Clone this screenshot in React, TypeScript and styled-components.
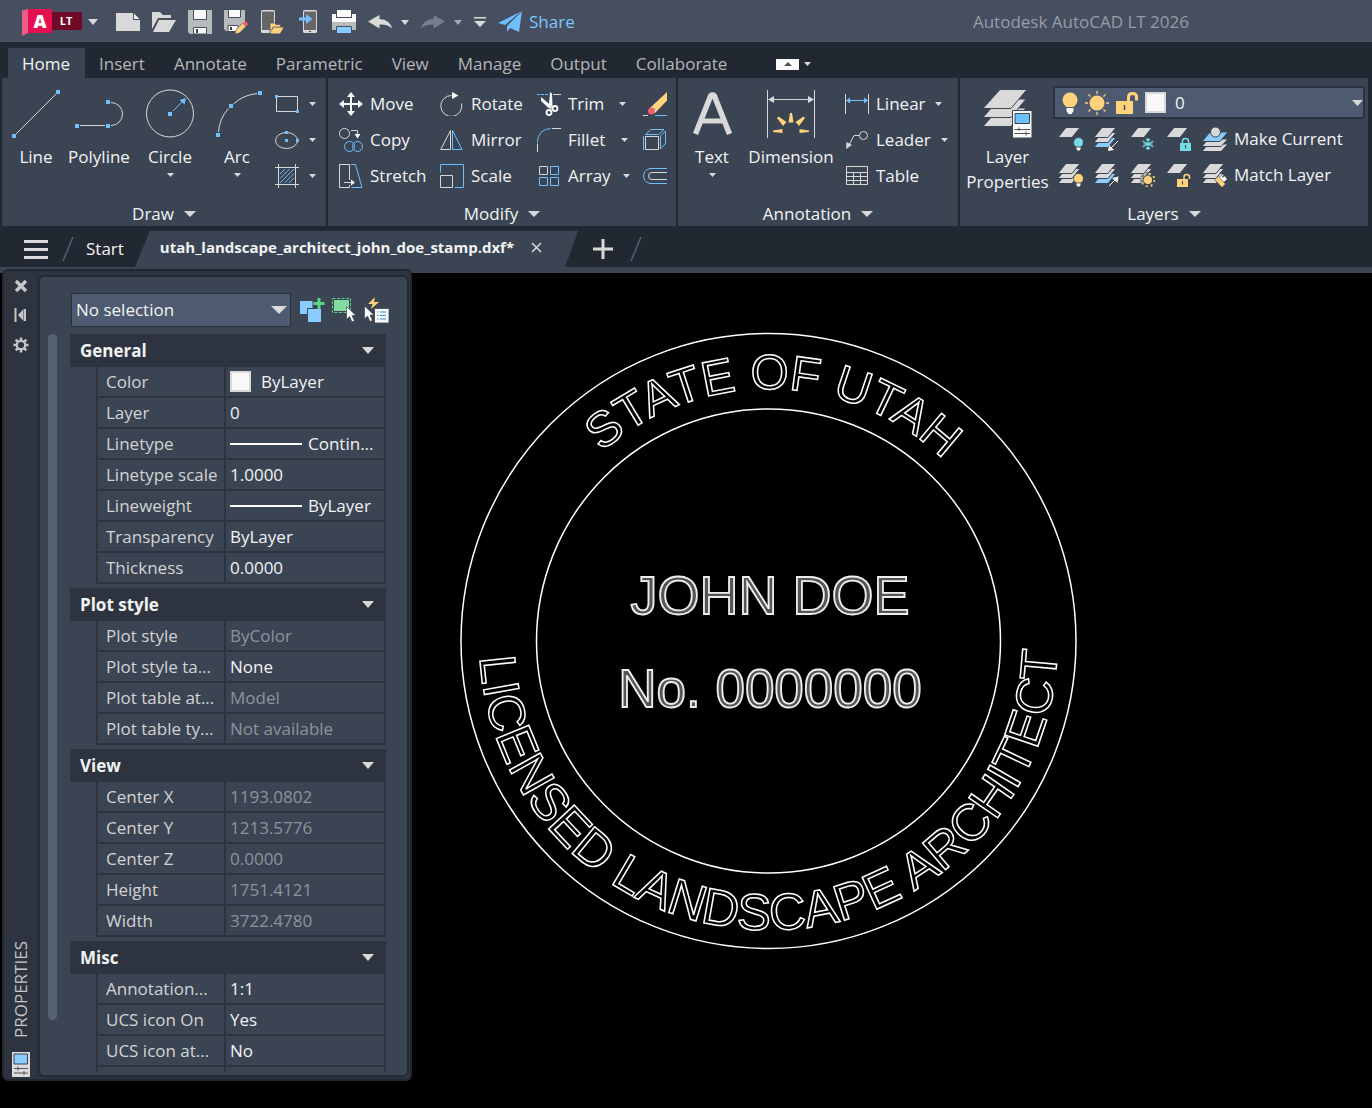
import React from "react";
import styled, { createGlobalStyle } from "styled-components";

const color = {
  title: "#464e60",
  dark: "#222831",
  panel: "#3b4453",
  header: "#2d333f",
  field: "#4d5a6f",
  line: "#d9d9d9",
  blue: "#6ebffc",
  sky: "#8accff",
  yellow: "#ffd27b",
  teal: "#76dce6",
  text: "#f2f3f4",
  muted: "#b4b7ba",
};

const Global = createGlobalStyle`
  *, *::before, *::after { box-sizing: border-box; }
  body {
    margin: 0;
    background: #000;
    color: ${color.text};
    font: 17px/24px "Open Sans", "Noto Sans", sans-serif;
  }
  button, select { font: inherit; color: inherit; }
  button { background: none; border: 0; padding: 0; cursor: pointer; }
  svg { display: block; flex: none; }
`;

const Shell = styled.div`
  height: 100vh;
  display: flex;
  flex-direction: column;
  overflow: hidden;
`;

/* ---------- title bar ---------- */

const TitleBar = styled.header`
  flex: none;
  height: 42px;
  display: flex;
  align-items: center;
  padding: 2px 183px 0 22px;
  background: ${color.title};
`;

const Brand = styled.div`
  display: flex;
  align-items: center;
  gap: 6px;
`;

const QuickTools = styled.div`
  display: flex;
  align-items: center;
  gap: 12px;
  margin-left: 18px;
`;

const ToolButton = styled.button`
  display: flex;
  align-items: center;
  gap: 9px;
`;

const Share = styled.a`
  display: flex;
  align-items: center;
  gap: 7px;
  color: #7fc8fd;
  text-decoration: none;
`;

const AppTitle = styled.span`
  margin-left: auto;
  color: #979ca6;
`;

/* ---------- ribbon ---------- */

const RibbonTabs = styled.nav`
  flex: none;
  height: 36px;
  display: flex;
  align-items: flex-end;
  padding-left: 8px;
  background: ${color.dark};
`;

const RibbonTab = styled.button<{ $active?: boolean }>`
  height: 30px;
  padding: 2px 15px 0 14px;
  background: ${(p) => (p.$active ? color.panel : "transparent")};
  color: ${(p) => (p.$active ? color.text : color.muted)};
`;

const RibbonToggle = styled.div`
  height: 30px;
  display: flex;
  align-items: center;
  gap: 5px;
  margin-left: 34px;
  padding-top: 2px;
`;

const MinimizeButton = styled.button`
  width: 23px;
  height: 11px;
  display: grid;
  place-items: center;
  background: #fafafa;
`;

const Ribbon = styled.section`
  flex: none;
  height: 149px;
  display: flex;
  padding: 0 2px 1px;
  background: ${color.dark};
`;

const PanelBox = styled.section<{ $width?: number }>`
  flex: ${(p) => (p.$width ? `none` : `1`)};
  width: ${(p) => (p.$width ? `${p.$width}px` : `auto`)};
  display: flex;
  flex-direction: column;
  justify-content: space-between;
  border-right: 2px solid ${color.dark};
  background: ${color.panel};
`;

const PanelBody = styled.div<{ $inset: number }>`
  display: flex;
  padding: 8px 0 0 ${(p) => p.$inset}px;
`;

const PanelTitle = styled.button`
  display: flex;
  align-items: center;
  justify-content: center;
  gap: 10px;
  height: 25px;
`;

const BigButton = styled.button<{ $width: number }>`
  width: ${(p) => p.$width}px;
  display: flex;
  flex-direction: column;
  align-items: center;
  line-height: 25px;
  padding-top: 2px;
`;

const BigLabel = styled.span`
  margin: 6px 0 4px;
  white-space: pre;
`;

const SmallColumn = styled.div<{ $width?: number; $lead?: number }>`
  width: ${(p) => (p.$width ? `${p.$width}px` : "auto")};
  margin-left: ${(p) => p.$lead ?? 0}px;
  display: grid;
  grid-template-rows: repeat(3, 36px);
  align-items: center;
  align-content: start;
`;

const SmallButton = styled.button<{ $gap?: number }>`
  height: 24px;
  display: flex;
  align-items: center;
  gap: ${(p) => p.$gap ?? 7}px;
`;

const SmallLabel = styled.span<{ $width?: number }>`
  min-width: ${(p) => (p.$width ? `${p.$width}px` : "0")};
  text-align: left;
`;

const LayerTools = styled.div`
  flex: 1;
  padding-right: 3px;
`;

const LayerPicker = styled.label`
  height: 33px;
  display: flex;
  align-items: center;
  gap: 6px;
  margin-bottom: 2px;
  padding: 0 0 0 6px;
  border: 2px solid #2c3340;
  background: ${color.field};
`;

const Swatch = styled.span`
  flex: none;
  width: 21px;
  height: 21px;
  border: 2px solid #d8d8d8;
  background: #f8f8f8;
`;

const PlainSelect = styled.select<{ $inset?: number }>`
  flex: 1;
  min-width: 0;
  appearance: none;
  padding: 0 0 0 ${(p) => p.$inset ?? 0}px;
  border: 0;
  outline: 0;
  background: transparent;
`;

const LayerRow = styled.div`
  display: flex;
  align-items: center;
  gap: 12px;
  height: 36px;
  padding-left: 6px;
`;

/* ---------- file tabs ---------- */

const FileTabs = styled.nav`
  flex: none;
  height: 46px;
  display: flex;
  align-items: center;
  padding: 4px 0 0 24px;
  border-bottom: 6px solid ${color.panel};
  background: ${color.dark};
`;

const StartTab = styled.button`
  display: flex;
  align-items: center;
  gap: 12px;
  margin: 0 11px 0 14px;
`;

const FileTab = styled.div`
  height: 36px;
  display: flex;
  align-items: center;
  gap: 17px;
  padding: 0 36px 4px 25px;
  background: ${color.panel};
  clip-path: polygon(15px 0, 100% 0, calc(100% - 13px) 100%, 0 100%);
  font-size: 15px;
  font-weight: 700;
`;

const NewTab = styled.button`
  margin: 0 16px 0 14px;
`;

/* ---------- workspace and palette ---------- */

const Workspace = styled.main`
  flex: 1;
  min-height: 0;
  display: flex;
  background: #000;
`;

const Palette = styled.aside`
  position: relative;
  flex: none;
  width: 410px;
  display: flex;
  margin: -4px 0 27px 2px;
  padding: 4px 1px 2px 0;
  border: 2px solid ${color.dark};
  border-radius: 6px;
  background: ${color.header};
`;

const Rail = styled.div`
  width: 34px;
  display: flex;
  flex-direction: column;
  align-items: center;
  gap: 14px;
  padding-top: 4px;
`;

const RailName = styled.span`
  margin-top: auto;
  writing-mode: vertical-rl;
  transform: rotate(180deg);
  line-height: 24px;
  color: #c3c6ca;
`;

const PaletteBody = styled.div`
  flex: 1;
  min-width: 0;
  display: flex;
  flex-direction: column;
  padding: 16px 0 3px 8px;
  border: 2px solid #252b35;
  border-radius: 6px;
  background: ${color.panel};
`;

const Toolbar = styled.div`
  display: flex;
  align-items: center;
  gap: 6px;
  padding-left: 23px;
`;

const SelectionPicker = styled.label`
  flex: none;
  width: 220px;
  height: 34px;
  display: flex;
  align-items: center;
  margin-right: 2px;
  padding: 0 3px 0 4px;
  border: 1px solid #2a303b;
  border-radius: 2px;
  background: ${color.field};
`;

const Scroller = styled.div`
  flex: 1;
  min-height: 0;
  display: flex;
  gap: 13px;
  margin-top: 7px;
  padding-right: 21px;
  overflow: hidden;
`;

const ScrollThumb = styled.div`
  flex: none;
  width: 9px;
  height: 93%;
  border-radius: 5px;
  background: #566172;
`;

const Groups = styled.div`
  flex: 1;
  display: flex;
  flex-direction: column;
  gap: 4px;
`;

const GroupHead = styled.button`
  width: 100%;
  height: 33px;
  display: flex;
  align-items: center;
  justify-content: space-between;
  padding: 0 12px 0 10px;
  background: ${color.header};
  font-weight: 700;
`;

const PropTable = styled.table`
  width: calc(100% - 26px);
  margin-left: 26px;
  table-layout: fixed;
  border-spacing: 0;
  border-left: 2px solid ${color.header};
`;

const PropName = styled.th`
  width: 128px;
  height: 31px;
  padding: 0 0 0 8px;
  border: solid ${color.header};
  border-width: 0 2px 2px 0;
  color: #d2d3d4;
  font-weight: 400;
  text-align: left;
  white-space: nowrap;
`;

const PropValue = styled.td<{ $dim?: boolean }>`
  height: 31px;
  padding: 0 0 0 4px;
  border: solid ${color.header};
  border-width: 0 2px 2px 0;
  color: ${(p) => (p.$dim ? "#8d939c" : color.text)};
  white-space: nowrap;
`;

const ValueRow = styled.span<{ $gap: number }>`
  display: flex;
  align-items: center;
  gap: ${(p) => p.$gap}px;
`;

const Stroke = styled.span`
  width: 72px;
  height: 2px;
  background: #fff;
`;

const DrawingArea = styled.div`
  flex: 1;
  padding: 59px 0 0 47px;
`;

/* ---------- icons ---------- */

type Kids = { children?: React.ReactNode; w?: number; h?: number };

const Svg = ({ children, w = 24, h = 24 }: Kids) => (
  <svg width={w} height={h} viewBox={`0 0 ${w} ${h}`} fill="none" stroke={color.line} strokeWidth={1} aria-hidden="true">
    {children}
  </svg>
);

const Caret = ({ w = 7, h = 4, fill = color.line }: { w?: number; h?: number; fill?: string }) => (
  <svg width={w} height={h} viewBox={`0 0 ${w} ${h}`} aria-hidden="true">
    <path d={`M0 0H${w}L${w / 2} ${h}Z`} fill={fill} />
  </svg>
);

const Dots = ({ at, s = 4 }: { at: number[][]; s?: number }) => (
  <g fill={color.blue} stroke="none">
    {at.map(([x, y]) => (
      <rect key={`${x}-${y}`} x={x - s / 2} y={y - s / 2} width={s} height={s} />
    ))}
  </g>
);

const Logo = () => (
  <svg width="60" height="28" viewBox="0 0 60 28" role="img" aria-label="AutoCAD LT">
    <path d="M0 2.500L6 1V25L0 28Z" fill="#ef5c86" />
    <path d="M6 1H30V25H6Z" fill="#e51050" />
    <path d="M30 4H60V22H30Z" fill="#700a28" />
    <text x="18" y="19.500" textAnchor="middle" fontFamily="Open Sans" fontWeight="800" fontSize="18" fill="#fff">A</text>
    <text x="44" y="17" textAnchor="middle" fontFamily="Open Sans" fontWeight="700" fontSize="11" fill="#fff">LT</text>
  </svg>
);

const NewIcon = () => (
  <Svg><g stroke="none"><path d="M0 3H17V10H24V21H0Z" fill="#d9d9d9" /><path d="M18 3.500L23.500 9H18Z" fill="#fafafa" /></g></Svg>
);
const OpenIcon = () => (
  <Svg><g stroke="none" fill="#d9d9d9"><path d="M0 2H8L11 5H19V8H6L0 19Z" /><path d="M7 10H24L17 22H1Z" /></g></Svg>
);
const SaveIcon = () => (
  <Svg>
    <g stroke="none"><path d="M0 0H24V24H2L0 22Z" fill="#b9babc" /><path d="M5.500 -1H18.500V9.500H5.500Z" fill="#fafafa" stroke={color.title} /><path d="M5.500 17.500H18.500V24H5.500Z" fill="#fafafa" stroke={color.title} /><path d="M8 19H10V23H8Z" fill="#3b4453" /></g>
  </Svg>
);
const SaveAsIcon = () => (
  <Svg>
    <g stroke="none"><path d="M0 0H21V12L12 21H2L0 19Z" fill="#b9babc" /><path d="M4.500 -1H16.500V7.500H4.500Z" fill="#fafafa" stroke={color.title} /><path d="M4 15.500H14V21.500H4Z" fill="#fafafa" stroke={color.title} /><path d="M6 17H8V20H6Z" fill="#3b4453" /><path d="M11 24L12.500 19L19 13L22 16.500L15.500 23Z" fill={color.yellow} stroke={color.title} strokeWidth=".6" /><path d="M18.500 13.500L21 11.500Q23.500 11.500 24 14.500L21.500 16.500Z" fill="#ef6268" /></g>
  </Svg>
);
const OpenMobileIcon = () => (
  <Svg>
    <g stroke="none"><rect x="1" y="0" width="14" height="23" rx="1.500" fill="#d9d9d9" /><path d="M2 1.500H14V20H2Z" fill="#666" /><path d="M10 13H14.500L16 14.500H20.500V17H13L10 23Z" fill={color.yellow} stroke={color.title} strokeWidth=".7" /><path d="M13.500 17.500H23.500L20 23.500H10.500Z" fill={color.yellow} /></g>
  </Svg>
);
const SaveMobileIcon = () => (
  <Svg>
    <g stroke="none"><rect x="7" y="0" width="14" height="23" rx="1.500" fill="#d9d9d9" /><path d="M8 1.500H20V20H8Z" fill="#666" /><path d="M13 21H15V22H13Z" fill="#444" /><path d="M3 7.500H10V4L16.500 9L10 14V10.500H3Z" fill={color.blue} /></g>
  </Svg>
);
const PrintIcon = () => (
  <Svg>
    <g stroke="none"><path d="M5 0H19V7H5Z" fill="#fafafa" /><path d="M0 4H4V8H20V4H24V12H0Z" fill="#fafafa" /><path d="M0 12H24V20H0Z" fill="#b9babc" /><path d="M4.500 16.500H19.500V23.500H4.500Z" fill={color.sky} stroke={color.title} /></g>
  </Svg>
);
const UndoIcon = ({ flip, fill = color.line }: { flip?: boolean; fill?: string }) => (
  <Svg>
    <path transform={flip ? "matrix(-1 0 0 1 24 0)" : undefined} stroke="none" fill={fill} d="M0 11.500L11.500 5V9Q22 9.500 24 18.500Q19.500 14 11.500 14.500V18.500Z" />
  </Svg>
);
const CustomizeIcon = () => (
  <Svg w={12} h={10}><path stroke="none" fill={color.line} d="M0 0H12V1.500H0ZM0 4H12L6 10Z" /></Svg>
);
const PlaneIcon = () => (
  <Svg><g stroke="none" fill={color.blue}><path d="M24 1L0 13L7 15Z" /><path d="M24 1L9 16V22L12 18L21 22Z" /></g><path d="M24 1L8 15.500V22" stroke={color.title} strokeWidth=".8" /></Svg>
);

const LineIcon = () => (<Svg w={50} h={50}><path d="M5 46L46 5" /><Dots at={[[3, 48], [47, 4]]} /></Svg>);
const PolylineIcon = () => (<Svg w={50} h={50}><path d="M6 37.500H31M37 37.500A11.500 11.500 0 0 0 37 14.500" /><Dots at={[[3, 38], [34, 38], [34, 14]]} /></Svg>);
const CircleIcon = () => (
  <Svg w={50} h={50}><circle cx="25" cy="25.500" r="23.500" /><path d="M28 23L38 13" stroke={color.blue} /><path d="M41 10L39.500 16.500L34.500 12Z" fill={color.blue} stroke="none" /><Dots at={[[25, 26]]} /></Svg>
);
const ArcIcon = () => (<Svg w={50} h={50}><path d="M6.500 44Q7.500 30 16.500 20.500M21.500 16Q31 7 45 5.500" /><Dots at={[[6, 47], [19, 18], [48, 5]]} /></Svg>);
const RectIcon = () => (<Svg><path d="M1.500 4.500H22.500V19.500H1.500Z" /><Dots s={3} at={[[1.5, 4.5], [22.5, 19.5]]} /></Svg>);
const EllipseIcon = () => (<Svg><ellipse cx="11.500" cy="12.500" rx="11" ry="8" /><Dots s={3} at={[[11.5, 4.5], [11.5, 12.5], [22.5, 12.5]]} /></Svg>);
const HatchIcon = () => (
  <Svg><path d="M3.500 0V24M20.500 0V24M0 3.500H24M0 20.500H24" /><path d="M5 10L10 5M5 14.500L14.500 5M5 19L19 5M9.500 19L19 9.500M14 19L19 14" stroke={color.blue} /></Svg>
);
const MoveIcon = () => (
  <Svg><path d="M12 3V21M3 12H21" stroke="#fafafa" strokeWidth="2" /><path stroke="none" fill="#fafafa" d="M12 0L16 5H8ZM12 24L8 19H16ZM0 12L5 8V16ZM24 12L19 16V8Z" /></Svg>
);
const CopyIcon = () => (
  <Svg><circle cx="5.500" cy="5.500" r="5" /><path d="M12 2.500H18.500V7" /><path d="M15.500 6H21.500L18.500 10.500Z" fill="#fafafa" stroke="none" /><g stroke={color.blue}><circle cx="10.500" cy="18.500" r="5" /><circle cx="18.500" cy="18.500" r="5" /></g></Svg>
);
const StretchIcon = () => (
  <Svg><path d="M10.500 16V.500H.500V23.500H10.500V21M5 18.500H13" /><path d="M12 15.500L16 18.500L12 21.500Z" fill="#fafafa" stroke="none" /><path d="M12 .500H16.500L23 23.500H12.500" stroke={color.blue} /></Svg>
);
const RotateIcon = () => (
  <Svg><path d="M21.500 11.500A10.500 10.500 0 1 1 11.500 3.500" /><path d="M12 0L18.500 3.500L12 7Z" fill="#fafafa" stroke="none" /></Svg>
);
const MirrorIcon = () => (<Svg><path d="M10.500 2.500V21.500H.800Z" /><path d="M12.500 2.500V21.500H22Z" stroke={color.blue} /></Svg>);
const ScaleIcon = () => (<Svg><path d="M.500 8.500V.500H23.500V23.500H15" stroke={color.blue} /><path d="M.500 11.500H12.500V23.500H.500Z" /></Svg>);
const TrimIcon = () => (
  <Svg><path d="M0 2.500H11" stroke={color.blue} strokeDasharray="3 1" /><path d="M16 2.500H24" /><path stroke="none" fill="#fafafa" d="M4 5L13.500 13L15 17L11.500 16L4 9ZM13 0L15 1.500L15.500 14L12.500 16L12 12Z" /><g stroke="#fafafa" strokeWidth="1.800"><circle cx="12" cy="20.500" r="2.500" /><circle cx="18" cy="16.500" r="2.500" /></g></Svg>
);
const FilletIcon = () => (<Svg><path d="M.500 14.500A13 13 0 0 1 13.500 .500" stroke={color.blue} /><path d="M15 .500H24M.500 15.500V24" /></Svg>);
const ArrayIcon = () => (
  <Svg><path d="M2.500 2.500H10.500V10.500H2.500Z" /><path stroke={color.blue} d="M13.500 2.500H21.500V10.500H13.500ZM2.500 13.500H10.500V21.500H2.500ZM13.500 13.500H21.500V21.500H13.500Z" /></Svg>
);
const EraseIcon = () => (
  <Svg><path d="M0 23.500H5" /><path d="M12 23.500H24" stroke={color.blue} /><g stroke="none"><path d="M24 0V8.500L14 19L8.500 14.500Z" fill={color.yellow} /><path d="M8.500 14.500L14 19L12 21L6.500 16.500Z" fill="#fafafa" /><circle cx="8.500" cy="19" r="3.500" fill="#ef6268" /></g></Svg>
);
const ExplodeIcon = () => (
  <Svg><path d="M2.500 8.500H15.500V21.500H2.500Z" /><path stroke={color.blue} d="M2.500 6.500L8 1.500H21L15.500 6.500ZM17.500 8L22.500 3V15.500L17.500 21ZM.500 8V22" /></Svg>
);
const OffsetIcon = () => (<Svg><path stroke={color.blue} d="M24 4.500H8A7.500 7.500 0 0 0 8 19.500H24" /><path d="M24 8.500H9A3.500 3.500 0 0 0 9 15.500H24" /></Svg>);

const TextIcon = () => (
  <Svg w={50} h={50}><path d="M8.500 46L24 7H27L42.500 46" strokeWidth="5.500" strokeLinejoin="bevel" /><path d="M15 33H36" strokeWidth="5" /></Svg>
);
const DimensionIcon = () => (
  <Svg w={50} h={50}>
    <path d="M1.500 2V50M48.500 2V50M5 11.500H45" />
    <path stroke="none" fill={color.line} d="M2 11.500L8 8V15ZM48 11.500L42 8V15Z" />
    <path stroke="none" fill={color.yellow} d="M24 25H26L27.500 34.500H22.500ZM11 30L12.500 28.500L20.500 34L17 38ZM39 30L37.500 28.500L29.500 34L33 38ZM7 42.500L16.500 41V45L7 44ZM43 42.500L33.500 41V45L43 44Z" />
  </Svg>
);
const LinearIcon = () => (
  <Svg><path d="M.500 2V22M23.500 2V22" /><path d="M3 8.500H21" stroke={color.blue} /><path stroke="none" fill={color.blue} d="M1 8.500L5 5.500V11.500ZM23 8.500L19 11.500V5.500Z" /></Svg>
);
const LeaderIcon = () => (
  <Svg><circle cx="18.500" cy="7.500" r="4" /><path d="M14.500 7.500H9L4 17" /><path d="M1 21L1.500 14L7 17Z" fill={color.line} stroke="none" /></Svg>
);
const TableIcon = () => (<Svg><path d="M1.500 2.500H22.500V20.500H1.500ZM1.500 8.500H22.500M1.500 12.500H22.500M1.500 16.500H22.500M8.500 8.500V20.500M15.500 8.500V20.500" /></Svg>);

const LayerPropsIcon = () => (
  <Svg w={50} h={50}>
    <g stroke={color.panel} fill={color.line}><path d="M0 38.500L16 20H43L28 38.500Z" /><path d="M0 29.500L16 11H43L28 29.500Z" /><path d="M0 20.500L17 1.500H44L28 20.500Z" /></g>
    <path d="M29.500 22.500H49V50H29.500Z" fill="#fafafa" stroke={color.panel} />
    <path d="M32 25.500H46.500V35.500H32Z" fill={color.blue} stroke="#3b4453" />
    <path d="M31.500 41.500H47M31.500 45.500H47M36 39.500V43M43 43.500V47.500" stroke="#555" />
  </Svg>
);

const Sheets = ({ n = 3, mark }: { n?: number; mark?: number }) => (
  <g stroke={color.panel}>
    {[2, 1, 0].filter((i) => i < n).map((i) => (
      <path key={i} d={`M-1 ${10.5 + i * 5}L7 ${0.5 + i * 5}H21L13 ${10.5 + i * 5}Z`} fill={mark === i ? color.sky : color.line} />
    ))}
  </g>
);
const MiniBulb = ({ fill }: { fill: string }) => (
  <g stroke={color.panel} strokeWidth=".8"><circle cx="19.500" cy="15.500" r="5" fill={fill} /><path d="M17 20H22V22L20.500 24H18.500L17 22Z" fill="#fafafa" /></g>
);
const MiniLock = ({ fill, open }: { fill: string; open?: boolean }) => (
  <g><path stroke={fill} strokeWidth="1.500" d={open ? "M17 17V14Q17 11.500 19.500 11.500Q22.500 11.500 22.500 14V16" : "M15.500 17V14Q15.500 11.500 18.500 11.500Q21.500 11.500 21.500 14V17"} /><path d={open ? "M10 16H21V24H10Z" : "M13 16H24V24H13Z"} fill={fill} stroke="none" /><path d={open ? "M15.500 18V21.500" : "M18.500 18V21.500"} stroke="#3b4453" /></g>
);
const layerTools = [
  [
    { name: "Off", icon: <Svg><Sheets n={1} /><MiniBulb fill={color.teal} /></Svg> },
    { name: "Isolate", icon: <Svg><Sheets mark={2} /><path d="M23 14L15 22" stroke="#fafafa" /><path d="M13 24L14 18L19 23Z" fill="#fafafa" stroke="none" /></Svg> },
    { name: "Freeze", icon: <Svg><Sheets n={1} /><path stroke={color.teal} strokeWidth="1.200" d="M17 11V23M11.500 14L22.500 20M11.500 20L22.500 14M15 12L17 14L19 12M15 22L17 20L19 22M12 17H22" /></Svg> },
    { name: "Lock", icon: <Svg><Sheets n={1} /><MiniLock fill={color.teal} /></Svg> },
  ],
  [
    { name: "Turn all layers on", icon: <Svg><Sheets /><MiniBulb fill={color.yellow} /></Svg> },
    { name: "Unisolate", icon: <Svg><Sheets mark={2} /><path d="M14 23L21 16" stroke="#fafafa" /><path d="M23.500 13.500L22.500 20L17 15Z" fill="#fafafa" stroke="none" /></Svg> },
    { name: "Thaw all layers", icon: <Svg><Sheets /><circle cx="17" cy="17" r="8" fill={color.panel} stroke="none" opacity=".6" /><circle cx="17" cy="17" r="4" fill={color.yellow} stroke="none" /><circle cx="17" cy="17" r="6.500" stroke={color.yellow} strokeDasharray="2 3.100" strokeWidth="1.800" /></Svg> },
    { name: "Unlock", icon: <Svg><Sheets n={1} /><MiniLock fill={color.yellow} open /></Svg> },
  ],
];
const MakeCurrentIcon = () => (
  <Svg>
    <g stroke={color.panel} fill={color.line}><path d="M-1 24.500L5 17H25L18 24.500Z" /><path d="M-1 19.500L5 12H25L18 19.500Z" /><path d="M-1 14.500L7 5H25L17 14.500Z" fill={color.sky} /><circle cx="12.500" cy="5" r="5" /></g>
  </Svg>
);
const MatchLayerIcon = () => (
  <Svg>
    <Sheets />
    <g stroke={color.panel} strokeWidth=".6"><path d="M15 15L20 11L24.500 16L20 20Z" fill="#fafafa" /><path d="M11.500 16.500L15 13.500L22.500 21L19 24.500Z" fill={color.yellow} /></g><path d="M19.500 14L22.500 11.500" stroke={color.panel} strokeWidth="1.500" />
  </Svg>
);

const BulbIcon = () => (
  <Svg w={18}><g stroke="none"><path d="M9 1.500A7.500 7.500 0 0 1 14.500 14L12.500 16H5.500L3.500 14A7.500 7.500 0 0 1 9 1.500Z" fill={color.yellow} /><path d="M5.500 17H12.500V20L10.500 23H7.500L5.500 20Z" fill="#fafafa" /></g></Svg>
);
const SunIcon = () => (
  <Svg><circle cx="12" cy="12" r="7.500" fill={color.yellow} stroke="none" /><path stroke={color.yellow} strokeWidth="1.300" d="M12 0V3M12 21V24M0 12H3M21 12H24M3.500 3.500L5.500 5.500M18.500 18.500L20.500 20.500M3.500 20.500L5.500 18.500M18.500 5.500L20.500 3.500" /></Svg>
);
const UnlockIcon = () => (
  <Svg><path d="M1 10H18V23H1Z" fill={color.yellow} stroke="none" /><path d="M13.500 10V6Q13.500 2.500 17.500 2.500Q21.500 2.500 21.500 6V9.500" stroke={color.yellow} strokeWidth="3" /><path d="M9.500 14V19" stroke="#444" strokeWidth="1.500" /></Svg>
);

const MenuIcon = () => (<Svg h={19}><path d="M0 1.500H24M0 9.500H24M0 17.500H24" strokeWidth="3" /></Svg>);
const SlashIcon = () => (<Svg w={12} h={24}><path d="M1 24L11 0" stroke="#555f70" strokeWidth="1.500" /></Svg>);
const TabCloseIcon = () => (<Svg w={11} h={11}><path d="M1 1L10 10M10 1L1 10" strokeWidth="1.500" /></Svg>);
const PlusIcon = () => (<Svg w={22} h={22}><path d="M11 1V21M1 11H21" strokeWidth="3" /></Svg>);

const RailCloseIcon = () => (<Svg w={14} h={14}><path d="M2 2L12 12M12 2L2 12" stroke="#c4c6c9" strokeWidth="3.500" /></Svg>);
const RailPinIcon = () => (<Svg w={14} h={16}><path d="M1.500 1V15" stroke="#c4c6c9" strokeWidth="2" /><path d="M4 8L9.500 2V14ZM10 2H12V14H10Z" fill="#c4c6c9" stroke="none" /></Svg>);
const RailGearIcon = () => (
  <Svg w={16} h={16}>
    <circle cx="8" cy="8" r="4.200" stroke="#c4c6c9" strokeWidth="2.200" />
    <path d="M8 .500V4M8 12V15.500M.500 8H4M12 8H15.500M2.700 2.700L5.200 5.200M10.800 10.800L13.300 13.300M2.700 13.300L5.200 10.800M10.800 5.200L13.300 2.700" stroke="#c4c6c9" strokeWidth="2.600" />
  </Svg>
);
const RailPropsIcon = () => (
  <Svg w={18} h={25}><path d="M0 0H18V25H0Z" fill="#dcdcdc" stroke="none" /><path d="M2 2H15.500V12H2Z" fill={color.sky} stroke="#3b4453" /><path d="M2 16.500H16M2 21H16M6 14.500V18.500M12 19V23" stroke="#555" /></Svg>
);
const CursorShape = ({ x, y }: { x: number; y: number }) => (
  <path transform={`translate(${x} ${y})`} d="M0 0V13L3 10L5.500 15.500L8 14.500L5.500 9H9.500Z" fill="#fafafa" stroke={color.panel} strokeWidth=".7" />
);
const PickAddIcon = () => (
  <Svg w={26} h={26}><path d="M1 4H13.500V17H1Z" fill={color.sky} stroke="none" /><path d="M8.500 11.500H22.500V25.500H8.500Z" fill={color.sky} stroke={color.panel} /><path d="M20 1V12M14.500 6.500H25.500" stroke="#5bd483" strokeWidth="3" /></Svg>
);
const SelectIcon = () => (
  <Svg w={26} h={26}><path d="M1.500 1.500H19.500V15.500H1.500Z" stroke="#5bd483" strokeDasharray="3 1.500" /><path d="M3 3H18V14H3Z" fill="#83dba2" stroke="none" /><CursorShape x={15.5} y={9.5} /></Svg>
);
const QuickSelectIcon = () => (
  <Svg w={26} h={26}><path d="M12 0L5 7H9.500L8 12L16 5H11Z" fill={color.yellow} stroke="none" /><CursorShape x={1.5} y={9} /><path d="M11.500 11.500H26V26H11.500Z" fill="#fafafa" stroke={color.panel} strokeWidth=".8" /><path d="M14 15H15.500M17 15H23M14 18.500H15.500M17 18.500H23M14 22H15.500M17 22H23" stroke="#2a8fe0" /></Svg>
);

/* ---------- data ---------- */

type Prop = { name: string; value: string; dim?: boolean; kind?: "swatch" | "stroke" };
const groups: { title: string; rows: Prop[] }[] = [
  {
    title: "General",
    rows: [
      { name: "Color", value: "ByLayer", kind: "swatch" },
      { name: "Layer", value: "0" },
      { name: "Linetype", value: "Contin...", kind: "stroke" },
      { name: "Linetype scale", value: "1.0000" },
      { name: "Lineweight", value: "ByLayer", kind: "stroke" },
      { name: "Transparency", value: "ByLayer" },
      { name: "Thickness", value: "0.0000" },
    ],
  },
  {
    title: "Plot style",
    rows: [
      { name: "Plot style", value: "ByColor", dim: true },
      { name: "Plot style ta...", value: "None" },
      { name: "Plot table at...", value: "Model", dim: true },
      { name: "Plot table ty...", value: "Not available", dim: true },
    ],
  },
  {
    title: "View",
    rows: [
      { name: "Center X", value: "1193.0802", dim: true },
      { name: "Center Y", value: "1213.5776", dim: true },
      { name: "Center Z", value: "0.0000", dim: true },
      { name: "Height", value: "1751.4121", dim: true },
      { name: "Width", value: "3722.4780", dim: true },
    ],
  },
  {
    title: "Misc",
    rows: [
      { name: "Annotation...", value: "1:1" },
      { name: "UCS icon On", value: "Yes" },
      { name: "UCS icon at...", value: "No" },
      { name: "", value: "" },
    ],
  },
];

const ribbonTabs = ["Home", "Insert", "Annotate", "Parametric", "View", "Manage", "Output", "Collaborate"];

type Tool = { icon: React.ReactNode; label: string; menu?: boolean; width?: number };
const modify: { width: number; tools: Tool[] }[] = [
  { width: 101, tools: [{ icon: <MoveIcon />, label: "Move" }, { icon: <CopyIcon />, label: "Copy" }, { icon: <StretchIcon />, label: "Stretch" }] },
  { width: 97, tools: [{ icon: <RotateIcon />, label: "Rotate" }, { icon: <MirrorIcon />, label: "Mirror" }, { icon: <ScaleIcon />, label: "Scale" }] },
  {
    width: 106,
    tools: [
      { icon: <TrimIcon />, label: "Trim", menu: true, width: 44 },
      { icon: <FilletIcon />, label: "Fillet", menu: true, width: 46 },
      { icon: <ArrayIcon />, label: "Array", menu: true, width: 48 },
    ],
  },
];
const annotate: Tool[] = [
  { icon: <LinearIcon />, label: "Linear", menu: true, width: 52 },
  { icon: <LeaderIcon />, label: "Leader", menu: true, width: 58 },
  { icon: <TableIcon />, label: "Table" },
];
const shapes = [
  { name: "Rectangle", icon: <RectIcon /> },
  { name: "Ellipse", icon: <EllipseIcon /> },
  { name: "Hatch", icon: <HatchIcon /> },
];

/* ---------- parts ---------- */

const Panel = ({ title, width, inset, children }: { title: string; width?: number; inset: number; children: React.ReactNode }) => (
  <PanelBox $width={width}>
    <PanelBody $inset={inset}>{children}</PanelBody>
    <PanelTitle>{title}<Caret w={12} h={6} /></PanelTitle>
  </PanelBox>
);

const Big = ({ icon, label, width, menu }: Tool & { width: number }) => (
  <BigButton $width={width}>
    {icon}
    <BigLabel>{label}</BigLabel>
    {menu && <Caret />}
  </BigButton>
);

const Column = ({ tools, width }: { tools: Tool[]; width?: number }) => (
  <SmallColumn $width={width}>
    {tools.map((t) => (
      <SmallButton key={t.label}>
        {t.icon}
        <SmallLabel $width={t.width}>{t.label}</SmallLabel>
        {t.menu && <Caret />}
      </SmallButton>
    ))}
  </SmallColumn>
);

const Value = ({ row }: { row: Prop }) => {
  if (row.kind === "swatch") return <ValueRow $gap={10}><Swatch />{row.value}</ValueRow>;
  if (row.kind === "stroke") return <ValueRow $gap={6}><Stroke />{row.value}</ValueRow>;
  return <>{row.value}</>;
};

const Stamp = () => (
  <svg width="619" height="619" viewBox="0 0 619 619" role="img" aria-label="Landscape architect stamp" fill="none" stroke="#fff" strokeWidth="1.500">
    <defs>
      <path id="top-arc" d="M57.500 309A252 252 0 0 1 561.500 309" />
      <path id="bottom-arc" d="M20.500 309A289 289 0 0 0 598.500 309" />
    </defs>
    <circle cx="309.500" cy="309" r="307.500" />
    <circle cx="309.500" cy="309" r="232" />
    <g fontFamily="Liberation Sans, Arial, sans-serif">
      <text fontSize="49" textAnchor="middle"><textPath href="#top-arc" startOffset="50.700%">STATE OF UTAH</textPath></text>
      <text fontSize="51"><textPath href="#bottom-arc" startOffset="16">LICENSED LANDSCAPE ARCHITECT</textPath></text>
      <g strokeWidth="1.800" stroke="#eee" fill="#555" textAnchor="middle">
        <text x="311" y="282" fontSize="54">JOHN DOE</text>
        <text x="311" y="375" fontSize="53">No. 0000000</text>
      </g>
    </g>
  </svg>
);

export default function App() {
  return (
    <>
      <Global />
      <Shell>
        <TitleBar>
          <Brand>
            <Logo />
            <ToolButton aria-label="Application menu"><Caret w={10} h={6} /></ToolButton>
          </Brand>
          <QuickTools>
            <ToolButton aria-label="New"><NewIcon /></ToolButton>
            <ToolButton aria-label="Open"><OpenIcon /></ToolButton>
            <ToolButton aria-label="Save"><SaveIcon /></ToolButton>
            <ToolButton aria-label="Save as"><SaveAsIcon /></ToolButton>
            <ToolButton aria-label="Open from mobile"><OpenMobileIcon /></ToolButton>
            <ToolButton aria-label="Save to mobile"><SaveMobileIcon /></ToolButton>
            <ToolButton aria-label="Plot"><PrintIcon /></ToolButton>
            <ToolButton aria-label="Undo"><UndoIcon /><Caret w={8} h={5} /></ToolButton>
            <ToolButton aria-label="Redo"><UndoIcon flip fill="#777e8b" /><Caret w={8} h={5} fill="#a4a8b0" /></ToolButton>
            <ToolButton aria-label="Customize"><CustomizeIcon /></ToolButton>
            <Share href="#share"><PlaneIcon />Share</Share>
          </QuickTools>
          <AppTitle>Autodesk AutoCAD LT 2026</AppTitle>
        </TitleBar>

        <RibbonTabs>
          {ribbonTabs.map((t, i) => <RibbonTab key={t} $active={i === 0}>{t}</RibbonTab>)}
          <RibbonToggle>
            <MinimizeButton aria-label="Minimize ribbon"><Svg w={8} h={4}><path d="M0 4L4 0L8 4Z" fill="#555" stroke="none" /></Svg></MinimizeButton>
            <Caret />
          </RibbonToggle>
        </RibbonTabs>

        <Ribbon>
          <Panel title="Draw" width={326} inset={4}>
            <Big icon={<LineIcon />} label="Line" width={60} />
            <Big icon={<PolylineIcon />} label="Polyline" width={66} />
            <Big icon={<CircleIcon />} label="Circle" width={76} menu />
            <Big icon={<ArcIcon />} label="Arc" width={58} menu />
            <SmallColumn $lead={9}>
              {shapes.map((s) => (
                <SmallButton key={s.name} $gap={10} aria-label={s.name}>{s.icon}<Caret /></SmallButton>
              ))}
            </SmallColumn>
          </Panel>
          <Panel title="Modify" width={350} inset={11}>
            {modify.map((c) => <Column key={c.width} tools={c.tools} width={c.width} />)}
            <SmallColumn>
              <SmallButton aria-label="Erase"><EraseIcon /></SmallButton>
              <SmallButton aria-label="Explode"><ExplodeIcon /></SmallButton>
              <SmallButton aria-label="Offset"><OffsetIcon /></SmallButton>
            </SmallColumn>
          </Panel>
          <Panel title="Annotation" width={282} inset={9}>
            <Big icon={<TextIcon />} label="Text" width={50} menu />
            <Big icon={<DimensionIcon />} label="Dimension" width={108} />
            <Column tools={annotate} />
          </Panel>
          <Panel title="Layers" inset={2}>
            <Big icon={<LayerPropsIcon />} label={"Layer\nProperties"} width={91} />
            <LayerTools>
              <LayerPicker>
                <BulbIcon />
                <SunIcon />
                <UnlockIcon />
                <Swatch />
                <PlainSelect aria-label="Layer" $inset={3}><option>0</option></PlainSelect>
                <Caret w={11} h={6} />
              </LayerPicker>
              {layerTools.map((row, r) => (
                <LayerRow key={r}>
                  {row.map((t) => <ToolButton key={t.name} aria-label={t.name}>{t.icon}</ToolButton>)}
                  <SmallButton>
                    {r === 0 ? <MakeCurrentIcon /> : <MatchLayerIcon />}
                    {r === 0 ? "Make Current" : "Match Layer"}
                  </SmallButton>
                </LayerRow>
              ))}
            </LayerTools>
          </Panel>
        </Ribbon>

        <FileTabs>
          <ToolButton aria-label="Menu"><MenuIcon /></ToolButton>
          <StartTab><SlashIcon />Start</StartTab>
          <FileTab>
            <span>utah_landscape_architect_john_doe_stamp.dxf*</span>
            <ToolButton aria-label="Close tab"><TabCloseIcon /></ToolButton>
          </FileTab>
          <NewTab aria-label="New tab"><PlusIcon /></NewTab>
          <SlashIcon />
        </FileTabs>

        <Workspace>
          <Palette>
            <Rail>
              <ToolButton aria-label="Close"><RailCloseIcon /></ToolButton>
              <ToolButton aria-label="Auto-hide"><RailPinIcon /></ToolButton>
              <ToolButton aria-label="Settings"><RailGearIcon /></ToolButton>
              <RailName>PROPERTIES</RailName>
              <RailPropsIcon />
            </Rail>
            <PaletteBody>
              <Toolbar>
                <SelectionPicker>
                  <PlainSelect aria-label="Selection"><option>No selection</option></PlainSelect>
                  <Caret w={16} h={8} />
                </SelectionPicker>
                <ToolButton aria-label="Toggle pick add"><PickAddIcon /></ToolButton>
                <ToolButton aria-label="Select objects"><SelectIcon /></ToolButton>
                <ToolButton aria-label="Quick select"><QuickSelectIcon /></ToolButton>
              </Toolbar>
              <Scroller>
                <ScrollThumb />
                <Groups>
                  {groups.map((g) => (
                    <section key={g.title}>
                      <GroupHead>{g.title}<Caret w={12} h={7} /></GroupHead>
                      <PropTable>
                        <tbody>
                          {g.rows.map((r) => (
                            <tr key={r.name}>
                              <PropName scope="row">{r.name}</PropName>
                              <PropValue $dim={r.dim}><Value row={r} /></PropValue>
                            </tr>
                          ))}
                        </tbody>
                      </PropTable>
                    </section>
                  ))}
                </Groups>
              </Scroller>
            </PaletteBody>
          </Palette>
          <DrawingArea><Stamp /></DrawingArea>
        </Workspace>
      </Shell>
    </>
  );
}
